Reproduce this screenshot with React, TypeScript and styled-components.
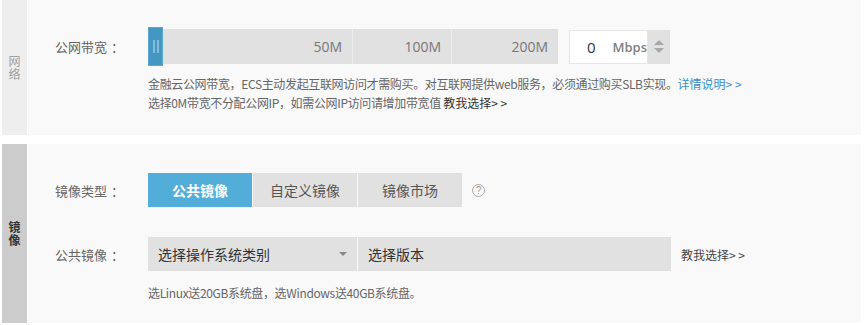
import React from "react";
import styled, { createGlobalStyle } from "styled-components";

const Global = createGlobalStyle`
  html, body { margin: 0; padding: 0; background: #ffffff; }
  body { font-family: "Noto Sans CJK SC", "Noto Sans", "Liberation Sans", sans-serif; }
`;

const Page = styled.div`
  width: 865px;
  padding: 0 4px 0 2px;
  box-sizing: border-box;
  display: flex;
  flex-direction: column;
  gap: 9px;
`;

const Section = styled.section<{ $h: number }>`
  height: ${(p) => p.$h}px;
  display: flex;
  gap: 1px;
`;

const Side = styled.div<{ $strong?: boolean }>`
  width: 25px;
  flex: none;
  background: ${(p) => (p.$strong ? "#cccccc" : "#eeeeee")};
  color: ${(p) => (p.$strong ? "#333333" : "#a0a0a0")};
  font-weight: ${(p) => (p.$strong ? 700 : 400)};
  font-size: 12px;
  display: flex;
  flex-direction: column;
  align-items: center;
  justify-content: center;
  gap: 1px;
`;

const SideChar = styled.span`
  display: block;
  height: 12px;
  line-height: 12px;
  overflow: visible;
`;

const Content = styled.div<{ $top: number }>`
  flex: 1;
  background: #f9f9f9;
  padding: ${(p) => p.$top}px 0 0 27px;
  display: flex;
  flex-direction: column;
`;

const Row = styled.div<{ $h: number; $mt?: number }>`
  display: flex;
  align-items: center;
  height: ${(p) => p.$h}px;
  margin-top: ${(p) => p.$mt ?? 0}px;
`;

const Label = styled.div`
  width: 93px;
  flex: none;
  font-size: 13px;
  color: #666666;
  display: flex;
  &::after {
    content: "：";
    margin-left: 4px;
  }
`;

const Slider = styled.div`
  display: flex;
  align-items: center;
  height: 39px;
`;

const Handle = styled.div`
  width: 15px;
  height: 39px;
  box-sizing: border-box;
  background: #4597c3;
  border: 1px solid #5aa8d2;
  display: flex;
  align-items: center;
  justify-content: center;
  gap: 2px;
  &::before, &::after {
    content: "";
    width: 2px;
    height: 13px;
    background: #82bcdc;
  }
`;

const Track = styled.div`
  display: flex;
  height: 35px;
  background: #e1e1e1;
`;

const Seg = styled.div<{ $w: number; $first?: boolean }>`
  width: ${(p) => p.$w}px;
  box-sizing: border-box;
  border-left: ${(p) => (p.$first ? "none" : "1px solid #ececec")};
  display: flex;
  align-items: center;
  justify-content: flex-end;
  padding-right: 10px;
  font-size: 14px;
  color: #777777;
  font-family: "Open Sans", "Noto Sans", sans-serif;
`;

const NumBox = styled.div`
  margin-left: 11px;
  display: flex;
  height: 34px;
`;

const NumInput = styled.div`
  width: 79px;
  box-sizing: border-box;
  background: #ffffff;
  border: 1px solid #e6e6e6;
  display: flex;
  align-items: center;
  font-family: "Open Sans", "Noto Sans", sans-serif;
`;

const NumVal = styled.span`
  width: 44px;
  text-align: center;
  font-size: 15px;
  color: #333333;
`;

const Unit = styled.span`
  font-size: 13px;
  color: #808080;
  font-weight: 600;
`;

const Spinner = styled.div`
  width: 22px;
  background: #e1e1e1;
  display: flex;
  flex-direction: column;
  align-items: center;
  justify-content: center;
  gap: 3px;
`;

const Tri = styled.span<{ $down?: boolean }>`
  width: 0;
  height: 0;
  border-left: 5px solid transparent;
  border-right: 5px solid transparent;
  ${(p) =>
    p.$down ? "border-top: 5px solid #a8a8a8;" : "border-bottom: 5px solid #a8a8a8;"}
`;

const Help = styled.div<{ $mt: number }>`
  margin-top: ${(p) => p.$mt}px;
  padding-left: 93px;
  font-size: 12px;
  line-height: 19px;
  color: #666666;
  letter-spacing: -0.35px;
`;

const Link = styled.a<{ $blue?: boolean }>`
  color: ${(p) => (p.$blue ? "#3a8fc6" : "#333333")};
  text-decoration: none;
  font-size: 12px;
  letter-spacing: 0;
`;

const Tabs = styled.div`
  display: flex;
  gap: 1px;
  height: 34px;
`;

const Tab = styled.div<{ $active?: boolean }>`
  width: 104px;
  display: flex;
  align-items: center;
  justify-content: center;
  font-size: 14px;
  background: ${(p) => (p.$active ? "#52aed8" : "#e1e1e1")};
  color: ${(p) => (p.$active ? "#ffffff" : "#555555")};
  font-weight: ${(p) => (p.$active ? 700 : 400)};
`;

const Q = styled.span`
  margin-left: 10px;
  width: 13px;
  height: 13px;
  box-sizing: border-box;
  border: 1px solid #aaaaaa;
  border-radius: 50%;
  color: #999999;
  font-size: 10px;
  line-height: 11px;
  text-align: center;
  font-family: "Liberation Sans", sans-serif;
`;

const Select = styled.div<{ $w: number }>`
  width: ${(p) => p.$w}px;
  height: 34px;
  box-sizing: border-box;
  background: #e1e1e1;
  display: flex;
  align-items: center;
  justify-content: space-between;
  padding: 0 10px;
  font-size: 14px;
  color: #333333;
`;

const Caret = styled.span`
  width: 0;
  height: 0;
  border-left: 4px solid transparent;
  border-right: 4px solid transparent;
  border-top: 4px solid #888888;
`;

const Selects = styled.div`
  display: flex;
  gap: 1px;
  align-items: center;
`;

const Teach = styled(Link)`
  margin-left: 10px;
  color: #444444;
`;

export default function App() {
  return (
    <>
      <Global />
      <Page>
        <Section $h={135}>
          <Side>
            <SideChar>网</SideChar>
            <SideChar>络</SideChar>
          </Side>
          <Content $top={27}>
            <Row $h={39}>
              <Label>公网带宽</Label>
              <Slider>
                <Handle />
                <Track>
                  <Seg $w={189} $first>50M</Seg>
                  <Seg $w={99}>100M</Seg>
                  <Seg $w={107}>200M</Seg>
                </Track>
              </Slider>
              <NumBox>
                <NumInput>
                  <NumVal>0</NumVal>
                  <Unit>Mbps</Unit>
                </NumInput>
                <Spinner>
                  <Tri />
                  <Tri $down />
                </Spinner>
              </NumBox>
            </Row>
            <Help $mt={8}>
              金融云公网带宽，ECS主动发起互联网访问才需购买。对互联网提供web服务，必须通过购买SLB实现。
              <Link $blue>详情说明&gt; &gt;</Link>
              <br />
              选择0M带宽不分配公网IP，如需公网IP访问请增加带宽值 <Link>教我选择&gt; &gt;</Link>
            </Help>
          </Content>
        </Section>
        <Section $h={179}>
          <Side $strong>
            <SideChar>镜</SideChar>
            <SideChar>像</SideChar>
          </Side>
          <Content $top={29}>
            <Row $h={34}>
              <Label>镜像类型</Label>
              <Tabs>
                <Tab $active>公共镜像</Tab>
                <Tab>自定义镜像</Tab>
                <Tab>镜像市场</Tab>
              </Tabs>
              <Q>?</Q>
            </Row>
            <Row $h={34} $mt={30}>
              <Label>公共镜像</Label>
              <Selects>
                <Select $w={209}>
                  选择操作系统类别
                  <Caret />
                </Select>
                <Select $w={313}>选择版本</Select>
              </Selects>
              <Teach>教我选择&gt; &gt;</Teach>
            </Row>
            <Help $mt={12}>选Linux送20GB系统盘，选Windows送40GB系统盘。</Help>
          </Content>
        </Section>
      </Page>
    </>
  );
}
